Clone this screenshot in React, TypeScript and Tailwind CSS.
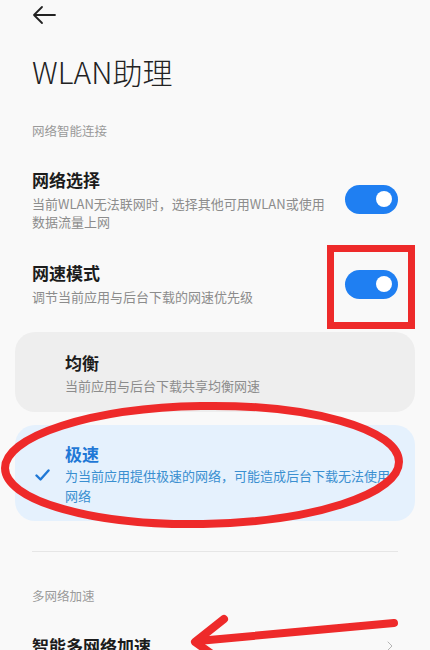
import { ChevronRight } from "lucide-react";

const font = { fontFamily: '"Noto Sans CJK SC", "Noto Sans", sans-serif' };

function Toggle({ className = "" }: { className?: string }) {
    return (
        <div className={"flex h-[29px] w-[53px] shrink-0 items-center justify-end rounded-full bg-[#1f7ff2] pr-[6px] " + className}>
            <div className="h-[16px] w-[16px] rounded-full bg-white" />
        </div>
    );
}

export default function App() {
    return (
        <main className="relative h-[650px] w-[430px] overflow-hidden bg-[#f9f9f9]" style={font}>
            {/* 顶部返回 */}
            <div className="px-8 pt-[4px]">
                <svg width="24" height="22" viewBox="0 0 24 22" fill="none" stroke="#222" strokeWidth="1.8" strokeLinecap="round" strokeLinejoin="round">
                    <path d="M23 11H2M10 3L2 11l8 8" />
                </svg>
            </div>

            <h1 className="mt-[27px] px-8 text-[30px] font-light leading-[36px] text-[#222]">WLAN助理</h1>

            <p className="mt-[34px] px-8 text-[12.5px] leading-[16px] text-[#9a9a9a]">网络智能连接</p>

            {/* 网络选择 */}
            <div className="mt-[30px] flex items-center gap-[14px] px-8">
                <div className="flex-1">
                    <h2 className="text-[17px] font-bold leading-[22px] text-[#1c1c1c]">网络选择</h2>
                    <p className="mt-[4px] text-[13px] leading-[18px] text-[#8c8c8c]">
                        当前WLAN无法联网时，选择其他可用WLAN或使用数据流量上网
                    </p>
                </div>
                <Toggle className="mb-[2px]" />
            </div>

            {/* 网速模式 */}
            <div className="mt-[31px] flex items-center gap-[14px] px-8">
                <div className="flex-1">
                    <h2 className="text-[17px] font-bold leading-[22px] text-[#1c1c1c]">网速模式</h2>
                    <p className="mt-[4px] text-[13px] leading-[18px] text-[#8c8c8c]">调节当前应用与后台下载的网速优先级</p>
                </div>
                <Toggle />
            </div>

            {/* 模式选项 */}
            <div className="mt-[26px] flex flex-col gap-[13px] px-[15px]">
                <div className="rounded-[20px] bg-[#eeeeee] pb-[17px] pl-[50px] pr-[20px] pt-[20px]">
                    <h3 className="text-[17px] font-bold leading-[22px] text-[#1c1c1c]">均衡</h3>
                    <p className="mt-[3px] text-[13px] leading-[18px] text-[#8c8c8c]">当前应用与后台下载共享均衡网速</p>
                </div>
                <div className="relative flex items-center rounded-[20px] bg-[#e5f1fd] pb-[15px] pl-[20px] pr-[18px] pt-[18px]">
                    <svg className="mr-[15px] shrink-0" width="15" height="12" viewBox="0 0 15 12" fill="none" stroke="#1f78d6" strokeWidth="2.4" strokeLinecap="round" strokeLinejoin="round">
                        <path d="M1.5 6.5l4 4L13.5 1.5" />
                    </svg>
                    <div className="flex-1">
                        <h3 className="text-[17px] font-bold leading-[22px] text-[#1f78d6]">极速</h3>
                        <p className="mt-[1px] text-[13px] leading-[20px] text-[#3a8fd0]">
                            为当前应用提供极速的网络，可能造成后台下载无法使用网络
                        </p>
                    </div>
                </div>
            </div>

            <div className="mx-8 mt-[30px] h-px bg-[#e6e6e6]" />

            <p className="mt-[36px] px-8 text-[12.5px] leading-[16px] text-[#9a9a9a]">多网络加速</p>

            <div className="mt-[31px] flex items-center justify-between px-8">
                <h2 className="text-[17px] font-bold leading-[22px] text-[#1c1c1c]">智能多网络加速</h2>
                <ChevronRight size={16} strokeWidth={1.5} className="text-[#b5b5b5]" />
            </div>

            {/* 红色标注 */}
            <svg className="pointer-events-none absolute left-0 top-0" width="430" height="650" viewBox="0 0 430 650" fill="none">
                <rect x="330.5" y="248.5" width="81" height="77" stroke="#ee2a2a" strokeWidth="7" />
                <ellipse cx="202" cy="465" rx="197" ry="59" stroke="#ee2a2a" strokeWidth="8" transform="rotate(-1 202 465)" />
                <g stroke="#ee2a2a" strokeWidth="8" strokeLinecap="round" strokeLinejoin="round">
                    <path d="M394 623L198 641" />
                    <path d="M224 619L195 642L226 664" />
                </g>
            </svg>
        </main>
    );
}
